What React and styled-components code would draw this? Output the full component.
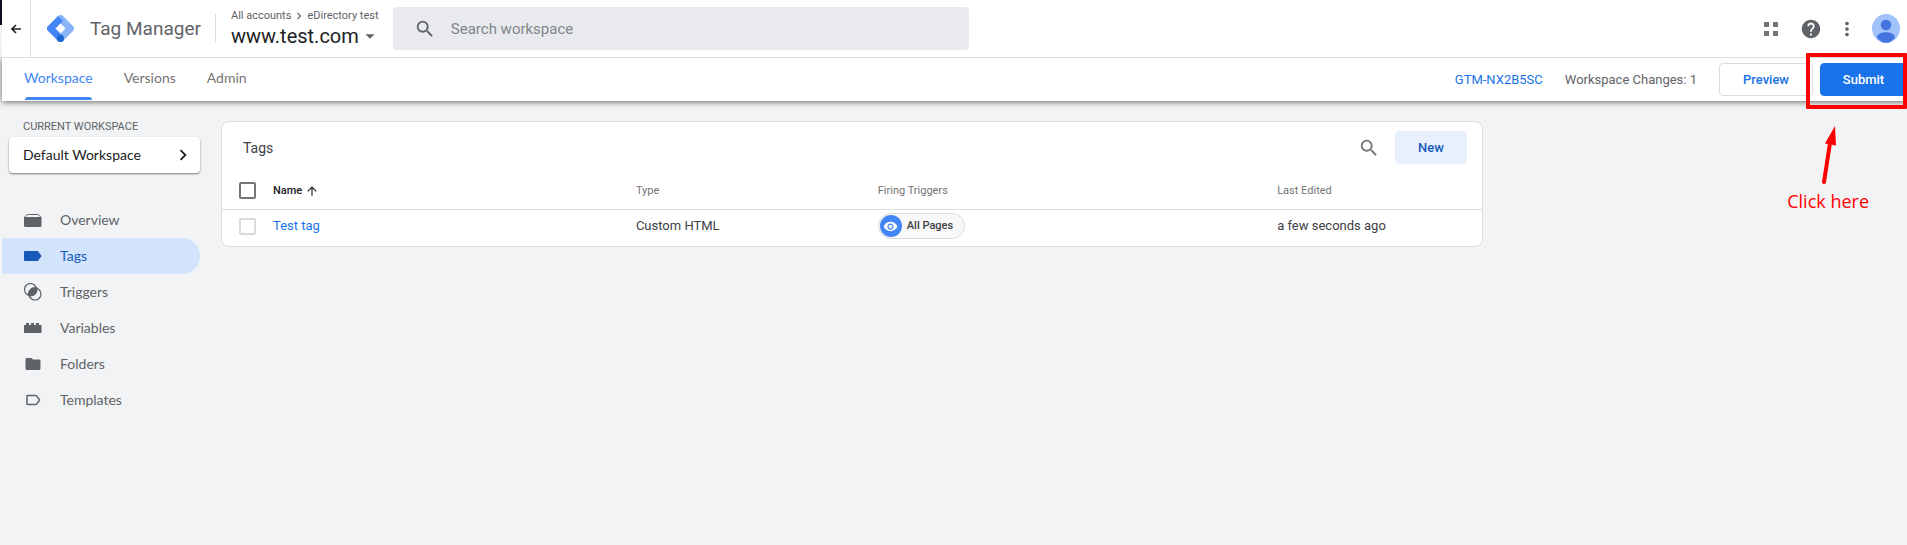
import React from "react";
import styled, { createGlobalStyle } from "styled-components";
import {
  MdArrowDropDown,
  MdArrowUpward,
  MdChevronRight,
  MdFolder,
  MdHelp,
  MdLabelOutline,
  MdMoreVert,
  MdSearch,
  MdVisibility
} from "react-icons/md";

const GlobalStyle = createGlobalStyle`
  * {
    box-sizing: border-box;
  }
  body {
    margin: 0;
    background-color: #f1f3f4;
    color: #3c4043;
    font-family: Roboto, "Liberation Sans", sans-serif;
    font-size: 13px;
    line-height: 20px;
  }
  a {
    color: inherit;
    text-decoration: none;
  }
  button, input {
    font: inherit;
  }
  svg {
    display: block;
    flex: none;
  }
`;

const displayFont = 'Lato, Roboto, sans-serif';

const Page = styled.div`
  position: relative;
  display: flex;
  min-height: 100vh;
  overflow: hidden;
`;

const Edge = styled.div`
  flex: none;
  width: 2px;
  background: linear-gradient(#0b1026 25px, #f1f3f4 25px);
`;

const Shell = styled.div`
  flex: 1;
  min-width: 0;
`;

const Header = styled.header`
  position: relative;
  z-index: 1;
  display: flex;
  align-items: center;
  height: 58px;
  padding-right: 7px;
  background-color: #fff;
  border-bottom: 1px solid #dadce0;
`;

const IconButton = styled.button`
  display: flex;
  align-items: center;
  justify-content: center;
  width: ${({ $width }) => $width || 22}px;
  padding: 0;
  border: 0;
  background: none;
  color: ${({ $color }) => $color || "#5f6368"};
  cursor: pointer;
`;

const BackButton = styled(IconButton)`
  align-self: stretch;
  border-right: 1px solid #dadce0;
`;

const Brand = styled.a`
  display: flex;
  align-items: center;
  gap: 16px;
  margin-left: 16px;
  color: #5f6368;
  font-size: 19px;
`;

const Divider = styled.div`
  width: 1px;
  height: 29px;
  margin: 0 15px 0 14px;
  background-color: #dadce0;
`;

const Crumbs = styled.div`
  display: flex;
  align-items: center;
  gap: 1px;
  color: #5f6368;
  font-size: 11px;
  line-height: 15px;
`;

const ContainerName = styled.button`
  display: flex;
  align-items: center;
  padding: 0;
  border: 0;
  background: none;
  color: #202124;
  font-size: 20px;
  line-height: 26px;
  white-space: nowrap;
`;

const SearchBox = styled.label`
  display: flex;
  align-items: center;
  flex: 0 1 576px;
  height: 43px;
  margin-left: 12px;
  padding: 0 21px;
  gap: 15px;
  border-radius: 4px;
  background-color: #e8eaed;
  color: #5f6368;
`;

const SearchInput = styled.input`
  flex: 1;
  min-width: 0;
  padding: 0;
  border: 0;
  outline: 0;
  background: none;
  font-size: 15px;
  &::placeholder {
    color: #80868b;
    opacity: 1;
  }
`;

const HeaderActions = styled.div`
  display: flex;
  align-items: center;
  gap: 14px;
  margin-left: auto;
`;

const Toolbar = styled.div`
  display: flex;
  align-items: center;
  height: 43px;
  padding-left: 22px;
  background-color: #fff;
  box-shadow: 0 1px 6px rgba(0, 0, 0, 0.6);
`;

const Tabs = styled.nav`
  display: flex;
  align-self: stretch;
  gap: 31px;
`;

const Tab = styled.a`
  position: relative;
  display: flex;
  align-items: center;
  padding-bottom: 4px;
  color: ${({ $active }) => ($active ? "#4285f4" : "#757575")};
  font-family: ${displayFont};
  font-size: 14px;
  &::after {
    content: "";
    position: absolute;
    right: 1px;
    bottom: 1px;
    left: 1px;
    height: 3px;
    border-radius: 3px 3px 0 0;
    background-color: ${({ $active }) => ($active ? "#4285f4" : "transparent")};
  }
`;

const ToolbarActions = styled.div`
  display: flex;
  align-items: center;
  gap: 22px;
  margin-left: auto;
  color: #5f6368;
`;

const ContainerId = styled.a`
  color: #1a73e8;
`;

const Buttons = styled.div`
  display: flex;
  gap: 7px;
`;

const Button = styled.button`
  width: ${({ $width }) => $width}px;
  height: 33px;
  padding: 0;
  border: 1px solid ${({ $border }) => $border};
  border-radius: 4px;
  background-color: ${({ $fill }) => $fill};
  color: ${({ $color }) => $color};
  font-weight: 500;
  cursor: pointer;
`;

const Body = styled.div`
  display: flex;
  align-items: flex-start;
`;

const Sidebar = styled.aside`
  flex: none;
  width: 198px;
  padding-top: 16px;
`;

const SidebarLabel = styled.div`
  padding-left: 21px;
  color: #5f6368;
  font-size: 11px;
`;

const WorkspaceButton = styled.button`
  display: flex;
  align-items: center;
  justify-content: space-between;
  width: 191px;
  height: 36px;
  margin: 0 0 29px 7px;
  padding: 0 6px 0 14px;
  border: 0;
  border-radius: 4px;
  background-color: #fff;
  box-shadow: 0 1px 2px rgba(0, 0, 0, 0.5);
  color: #202124;
  font-family: ${displayFont};
  font-size: 14px;
`;

const NavItem = styled.a`
  display: flex;
  align-items: center;
  gap: 18px;
  height: 36px;
  padding-left: 22px;
  border-radius: 0 18px 18px 0;
  background-color: ${({ $active }) => ($active ? "#d2e3fc" : "transparent")};
  color: ${({ $active }) => ($active ? "#185abc" : "#5f6368")};
  font-family: ${displayFont};
  font-size: 14px;
`;

const Main = styled.main`
  flex: 1;
  min-width: 0;
  padding: 20px 21px;
`;

const Card = styled.section`
  max-width: 1262px;
  border: 1px solid #dadce0;
  border-radius: 8px;
  background-color: #fff;
`;

const CardHeader = styled.div`
  display: flex;
  align-items: center;
  gap: 15px;
  height: 51px;
  padding: 0 15px 0 21px;
`;

const CardTitle = styled.h1`
  flex: 1;
  margin: 0;
  font-size: 14px;
  font-weight: 400;
`;

const Table = styled.table`
  width: 100%;
  border-collapse: collapse;
  table-layout: fixed;
  text-align: left;
`;

const HeadCell = styled.th`
  width: ${({ $width }) => $width};
  height: 36px;
  padding: 0;
  border-bottom: 1px solid #dadce0;
  color: ${({ $sorted }) => ($sorted ? "#202124" : "#757575")};
  font-size: 11px;
  font-weight: ${({ $sorted }) => ($sorted ? 500 : 400)};
`;

const Cell = styled.td`
  height: 37px;
  padding: 0 0 3px;
`;

const Sort = styled.span`
  display: flex;
  align-items: center;
  gap: 3px;
`;

const Checkbox = styled.input`
  display: block;
  appearance: none;
  width: 17px;
  height: 17px;
  margin: 0 0 0 17px;
  border: 2px solid ${({ $muted }) => ($muted ? "#dadada" : "#757575")};
  border-radius: 2px;
`;

const TagLink = styled.a`
  color: #1a73e8;
`;

const Chip = styled.span`
  display: inline-flex;
  align-items: center;
  gap: 5px;
  height: 26px;
  padding: 0 11px 0 1px;
  border: 1px solid #dadce0;
  border-radius: 13px;
  background-color: #f8f8f8;
  font-size: 11px;
  font-weight: 500;
  vertical-align: middle;
`;

const ChipIcon = styled.span`
  display: flex;
  align-items: center;
  justify-content: center;
  width: 22px;
  height: 22px;
  border-radius: 50%;
  background-color: #4285f4;
  color: #fff;
`;

// Red callout lying over the submit button
const Highlight = styled.div`
  position: absolute;
  top: 53px;
  right: 0;
  width: 101px;
  height: 56px;
  border: 4px solid #f00;
  border-radius: 1px;
  z-index: 2;
  pointer-events: none;
`;

const Hint = styled.div`
  position: absolute;
  top: 125px;
  right: 38px;
  display: flex;
  flex-direction: column;
  align-items: center;
  gap: 4px;
  color: #f00;
  font-family: "Open Sans", sans-serif;
  font-size: 18px;
  line-height: 24px;
`;

const BackArrow = () => (
  <svg width="10" height="10" viewBox="0 0 10 10" fill="none" stroke="currentColor" strokeWidth="1.6">
    <path d="M10 5H1.5M5 1 1 5l4 4" />
  </svg>
);

const Logo = () => (
  <svg width="27" height="27" viewBox="0 0 27 27" fill="none" strokeWidth="7" strokeLinejoin="round">
    <path d="M13.5 3.5l10 10-10 10" stroke="#8ab4f8" strokeLinecap="round" />
    <path d="M13.5 23.5l-10-10 10-10" stroke="#4285f4" />
    <circle cx="13.5" cy="23.5" r="3.5" fill="#1967d2" />
  </svg>
);

const Apps = () => (
  <svg width="14" height="14" viewBox="0 0 14 14" fill="#757575">
    <path d="M0 0h5v5H0zM9 0h5v5H9zM0 9h5v5H0zM9 9h5v5H9z" />
  </svg>
);

const Avatar = () => (
  <svg width="28" height="29" viewBox="0 0 28 29">
    <ellipse cx="14" cy="14.5" rx="14" ry="14.5" fill="#a1c2fa" />
    <circle cx="14" cy="11" r="5.3" fill="#4374e0" />
    <path d="M5 23.5c0-3.2 4-5.3 9-5.3s9 2.1 9 5.3c-2.3 3.2-5.4 5.3-9 5.3s-6.7-2.1-9-5.3z" fill="#4374e0" />
  </svg>
);

const OverviewIcon = () => (
  <svg width="18" height="18" viewBox="0 0 18 18" fill="currentColor">
    <path d="M0 6h17.5v8.500q0 1.500-1.500 1.500H1.500Q0 16 0 14.500z" />
    <path d="M.8 6 3.2 3.500h11L16.700 6" fill="none" stroke="currentColor" />
  </svg>
);

const TagIcon = () => (
  <svg width="18" height="18" viewBox="0 0 18 18" fill="currentColor">
    <path d="M1 4h12q.8 0 1.300.6L17.500 9l-3.200 4.400q-.5.600-1.300.600H1q-1 0-1-1V5q0-1 1-1z" />
  </svg>
);

const TriggerIcon = () => (
  <svg width="18" height="18" viewBox="0 0 18 18" fill="none" stroke="currentColor">
    <circle cx="6.5" cy="6.5" r="6" strokeWidth="1.2" />
    <circle cx="11" cy="11" r="6" strokeWidth="1.2" />
    <path d="M5.100 12.300A6 6 0 0 1 12.400 5.200 6 6 0 0 1 5.100 12.300z" fill="currentColor" strokeWidth="2" />
  </svg>
);

const VariableIcon = () => (
  <svg width="18" height="18" viewBox="0 0 18 18" fill="currentColor">
    <path d="M0 6h2V4h3v2h2V4h3v2h2V4h3v2h2.500v8H0z" />
  </svg>
);

const Arrow = () => (
  <svg width="16" height="60" viewBox="0 0 16 60">
    <path d="M4 57 10 18" stroke="#f00" strokeWidth="4" strokeLinecap="round" />
    <path d="M15 1 5 18.500 16 20.500z" fill="#f00" />
  </svg>
);

const navItems = [
  { name: "Overview", icon: <OverviewIcon /> },
  { name: "Tags", icon: <TagIcon />, active: true },
  { name: "Triggers", icon: <TriggerIcon /> },
  { name: "Variables", icon: <VariableIcon /> },
  { name: "Folders", icon: <MdFolder size={18} /> },
  { name: "Templates", icon: <MdLabelOutline size={18} /> }
];

const tags = [
  { name: "Test tag", type: "Custom HTML", trigger: "All Pages", edited: "a few seconds ago" }
];

const TagsTable = () => (
  <Table>
    <thead>
      <tr>
        <HeadCell $width="51px">
          <Checkbox type="checkbox" aria-label="Select all tags" />
        </HeadCell>
        <HeadCell $width="28.8%" $sorted>
          <Sort>Name <MdArrowUpward size={14} /></Sort>
        </HeadCell>
        <HeadCell $width="19.2%">Type</HeadCell>
        <HeadCell $width="31.7%">Firing Triggers</HeadCell>
        <HeadCell>Last Edited</HeadCell>
      </tr>
    </thead>
    <tbody>
      {tags.map(tag => (
        <tr key={tag.name}>
          <Cell>
            <Checkbox type="checkbox" aria-label={tag.name} $muted />
          </Cell>
          <Cell><TagLink href="#tag">{tag.name}</TagLink></Cell>
          <Cell>{tag.type}</Cell>
          <Cell>
            <Chip>
              <ChipIcon><MdVisibility size={15} /></ChipIcon>
              {tag.trigger}
            </Chip>
          </Cell>
          <Cell>{tag.edited}</Cell>
        </tr>
      ))}
    </tbody>
  </Table>
);

const App = () => (
  <Page>
    <GlobalStyle />
    <Edge />
    <Shell>
      <Header>
        <BackButton $width={29} $color="#202124" aria-label="Back"><BackArrow /></BackButton>
        <Brand href="#home"><Logo />Tag Manager</Brand>
        <Divider />
        <div>
          <Crumbs>
            <a href="#accounts">All accounts</a>
            <MdChevronRight size={14} />
            <a href="#account">eDirectory test</a>
          </Crumbs>
          <ContainerName>
            www.test.com
            <MdArrowDropDown size={22} color="#5f6368" />
          </ContainerName>
        </div>
        <SearchBox>
          <MdSearch size={22} />
          <SearchInput type="search" placeholder="Search workspace" aria-label="Search workspace" />
        </SearchBox>
        <HeaderActions>
          <IconButton $width={30} aria-label="Apps"><Apps /></IconButton>
          <IconButton aria-label="Help"><MdHelp size={22} /></IconButton>
          <IconButton aria-label="More"><MdMoreVert size={22} /></IconButton>
          <IconButton $width={28} aria-label="Account"><Avatar /></IconButton>
        </HeaderActions>
      </Header>
      <Toolbar>
        <Tabs>
          <Tab href="#workspace" $active>Workspace</Tab>
          <Tab href="#versions">Versions</Tab>
          <Tab href="#admin">Admin</Tab>
        </Tabs>
        <ToolbarActions>
          <ContainerId href="#container">GTM-NX2B5SC</ContainerId>
          <span>Workspace Changes: 1</span>
          <Buttons>
            <Button $width={94} $fill="#fff" $border="#dadce0" $color="#1a73e8">Preview</Button>
            <Button $width={87} $fill="#1a73e8" $border="#1a73e8" $color="#fff">Submit</Button>
          </Buttons>
        </ToolbarActions>
      </Toolbar>
      <Body>
        <Sidebar>
          <SidebarLabel>CURRENT WORKSPACE</SidebarLabel>
          <WorkspaceButton>
            Default Workspace
            <MdChevronRight size={22} />
          </WorkspaceButton>
          <nav>
            {navItems.map(item => (
              <NavItem href={"#" + item.name} $active={item.active} key={item.name}>
                {item.icon}
                {item.name}
              </NavItem>
            ))}
          </nav>
        </Sidebar>
        <Main>
          <Card>
            <CardHeader>
              <CardTitle>Tags</CardTitle>
              <IconButton $color="#757575" aria-label="Search tags"><MdSearch size={22} /></IconButton>
              <Button $width={72} $fill="#e8f0fe" $border="#e8f0fe" $color="#185abc">New</Button>
            </CardHeader>
            <TagsTable />
          </Card>
        </Main>
      </Body>
    </Shell>
    <Highlight />
    <Hint>
      <Arrow />
      Click here
    </Hint>
  </Page>
);

export default App;
